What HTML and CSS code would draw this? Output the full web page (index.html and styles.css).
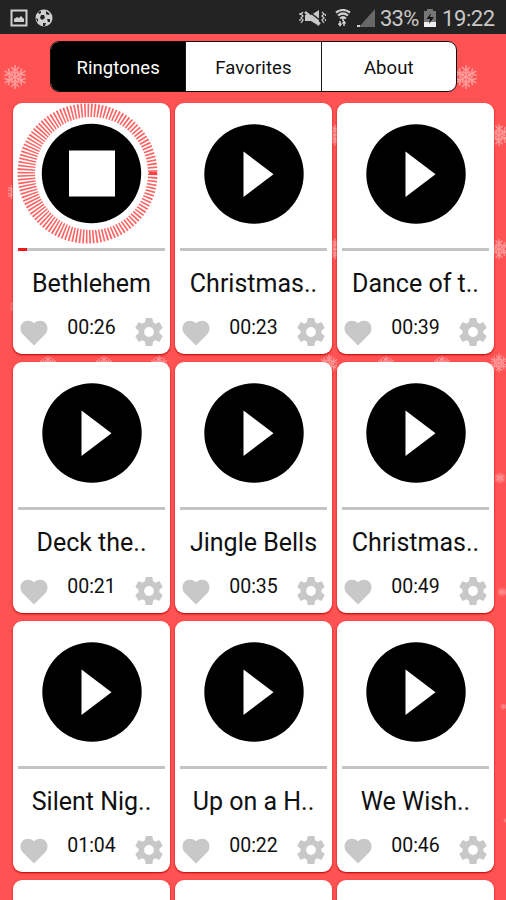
FILE: index.html
```html
<!DOCTYPE html>
<html lang="en">
<head>
<meta charset="utf-8">
<title>Ringtones</title>
<link rel="stylesheet" href="styles.css">
</head>
<body>
<svg class="defs" width="0" height="0" aria-hidden="true">
  <symbol id="play" viewBox="0 0 100 100"><circle cx="50" cy="50" r="49.7"/><path d="M39.5 27.5V73L69.5 50.2z" fill="#fff"/></symbol>
  <symbol id="heart" viewBox="0 0 28 26"><path d="M14 25.5L3.2 14.8C-4 7 4.500-4 14 3.200C23.500-4 32 7 24.800 14.800z"/></symbol>
  <symbol id="gear" viewBox="2 2 20 20"><path d="M19.430 12.980c.04-.32.07-.64.07-.98s-.03-.66-.07-.98l2.110-1.650c.19-.15.24-.42.12-.64l-2-3.460c-.12-.22-.39-.3-.61-.22l-2.490 1c-.52-.4-1.080-.73-1.690-.98l-.38-2.650C14.460 2.180 14.250 2 14 2h-4c-.25 0-.46.18-.49.42l-.38 2.650c-.61.25-1.170.59-1.690.98l-2.490-1c-.23-.09-.49 0-.61.22l-2 3.460c-.13.22-.07.49.12.64l2.110 1.650c-.04.32-.07.65-.07.98s.03.66.07.98l-2.110 1.650c-.19.15-.24.42-.12.64l2 3.460c.12.22.39.3.61.22l2.490-1c.52.4 1.080.73 1.690.98l.38 2.650c.03.24.24.42.49.42h4c.25 0 .46-.18.49-.42l.38-2.650c.61-.25 1.170-.59 1.690-.98l2.490 1c.23.09.49 0 .61-.22l2-3.460c.12-.22.07-.49-.12-.64l-2.110-1.650zM12 15.500a3.500 3.500 0 1 1 0-7 3.500 3.500 0 0 1 0 7z"/></symbol>
  <symbol id="flake" viewBox="-13 -13 26 26">
    <g fill="none" stroke="#ff9c9c" stroke-width="1.500">
      <path id="arm" d="M0 0V-12M-4-10L0-6L4-10M-3-6L0-3L3-6"/>
      <use href="#arm" transform="rotate(60)"/><use href="#arm" transform="rotate(120)"/><use href="#arm" transform="rotate(180)"/><use href="#arm" transform="rotate(240)"/><use href="#arm" transform="rotate(300)"/>
    </g>
  </symbol>
</svg>

<svg class="snow" viewBox="0 0 506 900" aria-hidden="true">
  <use href="#flake" x="2" y="64" width="26" height="26"/>
  <use href="#flake" x="453" y="64" width="26" height="26"/>
  <use href="#flake" x="6" y="182" width="20" height="20"/>
  <use href="#flake" x="9" y="298" width="17" height="17"/>
  <use href="#flake" x="324" y="124" width="22" height="22"/>
  <use href="#flake" x="324" y="238" width="22" height="22"/>
  <use href="#flake" x="487" y="123" width="24" height="24"/>
  <use href="#flake" x="488" y="238" width="22" height="22"/>
  <use href="#flake" x="38" y="355" width="20" height="20"/>
  <use href="#flake" x="94" y="355" width="20" height="20"/>
  <use href="#flake" x="149" y="355" width="20" height="20"/>
  <use href="#flake" x="319" y="354" width="20" height="20"/>
  <use href="#flake" x="376" y="355" width="20" height="20"/>
  <use href="#flake" x="432" y="355" width="20" height="20"/>
  <use href="#flake" x="489" y="353" width="20" height="20"/>
  <use href="#flake" x="494" y="472" width="12" height="12"/>
  <use href="#flake" x="497" y="587" width="10" height="10"/>
  <use href="#flake" x="500" y="703" width="7" height="7"/>
  <use href="#flake" x="503" y="818" width="5" height="5"/>
</svg>

<div class="screen">
  <header class="status">
    <div class="status-left">
      <svg width="18" height="18" viewBox="0 0 18 18"><path d="M1.500 1.500h15v15h-15z" fill="none" stroke="#d0d0d0" stroke-width="2"/><path d="M4 13V10l3-2 2 1 2-2 3 3v3z" fill="#d0d0d0"/></svg>
      <svg width="18" height="18" viewBox="0 0 18 18"><circle cx="9" cy="9" r="8.500" fill="#d0d0d0"/><path d="M6 6l3 0 1 3-3 2-2-2zM3 3l3-1 0 2-2 1zM11 2l4 3-2 1-2-1zM1 9l2 1v3l-1-1zM8 14h3l-1 3H8zM12 10l3 0 0 3-2 0z" fill="#232323"/></svg>
    </div>
    <div class="status-right">
      <svg class="mute" width="27" height="18" viewBox="0 0 27 18"><path d="M6 6h6l8-5v16l-8-5H6z" fill="#c8c8c8"/><path d="M8 1l14 11" stroke="#232323" stroke-width="1.500"/><path d="M6 3l15 12" stroke="#c8c8c8" stroke-width="2.500"/><path d="M4 3l-2 2 2 2-2 2 2 2-2 3M1 4v2M1 10v2M23 3l2 2-2 2 2 2-2 2 2 3M26.500 5v2M26.500 10v2" fill="none" stroke="#c8c8c8" stroke-width="1.300"/></svg>
      <svg class="wifi" width="16" height="18" viewBox="0 0 16 18"><path d="M1 3.500q7-5 14 0M3 6.500q5-4 10 0M5 9.500q3-2.500 6 0" fill="none" stroke="#d0d0d0" stroke-width="2.200"/><path d="M8 9v3M5 12v4M3.500 14.500L5 16.500l1.500-2M9 17v-4M7.500 14.500L9 12.500l1.500 2" fill="none" stroke="#d0d0d0" stroke-width="1.500"/></svg>
      <svg class="signal" width="18" height="18" viewBox="0 0 18 18"><path d="M18 0v18H2z" fill="#686868"/><path d="M0 16h3v2H0z" fill="#d0d0d0"/></svg>
      <span class="percent">33%</span>
      <svg class="battery" width="12" height="18" viewBox="0 0 12 18"><path d="M3 0h6v2h3v16H0V2h3z" fill="#777"/><path d="M0 13h12v5H0z" fill="#eee"/><path d="M7 4L2.500 10H6l-1 5 5-7H6z" fill="#161616"/></svg>
      <span class="clock">19:22</span>
    </div>
  </header>

  <nav class="tabs">
    <a class="tab active">Ringtones</a>
    <a class="tab">Favorites</a>
    <a class="tab">About</a>
  </nav>

  <main class="grid">
    <article class="card">
      <div class="player">
        <svg class="stop" width="157" height="145" viewBox="0 0 157 145">
          <circle class="rays" cx="74.500" cy="70.500" r="60" pathLength="240"/>
          <path d="M136 70.500h8" stroke="#ff4040" stroke-width="3"/>
          <circle cx="78.500" cy="70.500" r="56.500" fill="#fff"/>
          <circle cx="78.500" cy="70.500" r="49.700"/>
          <path d="M56 47.500h46v46H56z" fill="#fff"/>
        </svg>
      </div>
      <div class="progress"><div class="elapsed"></div></div>
      <h2>Bethlehem</h2>
      <div class="actions"><svg class="heart"><use href="#heart"/></svg><time>00:26</time><svg class="gear"><use href="#gear"/></svg></div>
    </article>
    <article class="card">
      <div class="player"><svg class="play"><use href="#play"/></svg></div>
      <div class="progress"></div>
      <h2>Christmas..</h2>
      <div class="actions"><svg class="heart"><use href="#heart"/></svg><time>00:23</time><svg class="gear"><use href="#gear"/></svg></div>
    </article>
    <article class="card">
      <div class="player"><svg class="play"><use href="#play"/></svg></div>
      <div class="progress"></div>
      <h2>Dance of t..</h2>
      <div class="actions"><svg class="heart"><use href="#heart"/></svg><time>00:39</time><svg class="gear"><use href="#gear"/></svg></div>
    </article>
    <article class="card">
      <div class="player"><svg class="play"><use href="#play"/></svg></div>
      <div class="progress"></div>
      <h2>Deck the..</h2>
      <div class="actions"><svg class="heart"><use href="#heart"/></svg><time>00:21</time><svg class="gear"><use href="#gear"/></svg></div>
    </article>
    <article class="card">
      <div class="player"><svg class="play"><use href="#play"/></svg></div>
      <div class="progress"></div>
      <h2>Jingle Bells</h2>
      <div class="actions"><svg class="heart"><use href="#heart"/></svg><time>00:35</time><svg class="gear"><use href="#gear"/></svg></div>
    </article>
    <article class="card">
      <div class="player"><svg class="play"><use href="#play"/></svg></div>
      <div class="progress"></div>
      <h2>Christmas..</h2>
      <div class="actions"><svg class="heart"><use href="#heart"/></svg><time>00:49</time><svg class="gear"><use href="#gear"/></svg></div>
    </article>
    <article class="card">
      <div class="player"><svg class="play"><use href="#play"/></svg></div>
      <div class="progress"></div>
      <h2>Silent Nig..</h2>
      <div class="actions"><svg class="heart"><use href="#heart"/></svg><time>01:04</time><svg class="gear"><use href="#gear"/></svg></div>
    </article>
    <article class="card">
      <div class="player"><svg class="play"><use href="#play"/></svg></div>
      <div class="progress"></div>
      <h2>Up on a H..</h2>
      <div class="actions"><svg class="heart"><use href="#heart"/></svg><time>00:22</time><svg class="gear"><use href="#gear"/></svg></div>
    </article>
    <article class="card">
      <div class="player"><svg class="play"><use href="#play"/></svg></div>
      <div class="progress"></div>
      <h2>We Wish..</h2>
      <div class="actions"><svg class="heart"><use href="#heart"/></svg><time>00:46</time><svg class="gear"><use href="#gear"/></svg></div>
    </article>
    <article class="card"></article>
    <article class="card"></article>
    <article class="card"></article>
  </main>
</div>
</body>
</html>
```
FILE: styles.css
```css
* { box-sizing: border-box; }
html { height: 100%; overflow: hidden; }
body {
  margin: 0;
  height: 900px;
  overflow: hidden;
  background: #ff5252;
  font-family: Roboto, "Liberation Sans", sans-serif;
  color: #101010;
}
svg { display: block; flex: none; }
.defs { position: absolute; }
.snow { position: absolute; top: 0; left: 0; width: 506px; height: 900px; }
.screen { position: relative; width: 506px; height: 900px; overflow: hidden; }

.status {
  height: 34px;
  background: #232323;
  display: flex;
  justify-content: space-between;
  padding: 1px 11px 0 10px;
  color: #c8c8c8;
}
.status-left, .status-right { display: flex; align-items: center; }
.status-left { gap: 7px; }
.percent { font-size: 22px; margin-left: 5px; width: 40px; letter-spacing: -0.8px; white-space: nowrap; padding-top: 1px; }
.clock { font-size: 22px; margin-left: 6px; width: 53px; letter-spacing: -0.4px; padding-top: 1px; }
.wifi { margin-left: 9px; }
.signal { margin-left: 6px; }
.battery { margin-left: 4px; }

.tabs {
  display: flex;
  width: 407px;
  height: 51px;
  margin: 7px 0 0 50px;
  border: 1.500px solid #101010;
  border-radius: 9px;
  overflow: hidden;
  background: #fff;
}
.tab {
  flex: 1;
  display: flex;
  align-items: center;
  justify-content: center;
  font-size: 18.500px;
  letter-spacing: 0.1px;
  padding-top: 2px;
}
.tab + .tab { border-left: 1px solid #181818; }
.tab.active { background: #000; color: #fff; }

.grid {
  display: grid;
  grid-template-columns: repeat(3, 157px);
  grid-auto-rows: 250.500px;
  gap: 8.500px 5px;
  margin: 11px 0 0 13px;
}
.card {
  background: #fff;
  border-radius: 9px;
  box-shadow: 0 1px 2px #b80000;
  display: flex;
  flex-direction: column;
  align-items: center;
}
.player {
  width: 157px;
  height: 145px;
  display: flex;
  justify-content: center;
}
.play { width: 100px; height: 100px; margin: 20.500px 0 0; }
.progress { width: 147px; height: 2.500px; background: #c4c4c4; }
.rays { fill: none; stroke: #ff6464; stroke-width: 20; stroke-dasharray: 1 1; }
.elapsed { width: 9px; height: 2.500px; background: #f01818; }
h2 {
  margin: 17px 0 0;
  height: 32px;
  line-height: 31px;
  font-size: 25px;
  font-weight: 400;
  white-space: nowrap;
}
.actions {
  width: 143px;
  display: flex;
  justify-content: space-between;
  margin-top: 15.500px;
  fill: #c8c8c8;
}
.heart { width: 28px; height: 26px; margin-top: 5px; }
.gear { width: 28px; height: 28px; margin: 3px 0.500px 0 -0.500px; }
time { font-size: 19.500px; line-height: 26px; }
```
